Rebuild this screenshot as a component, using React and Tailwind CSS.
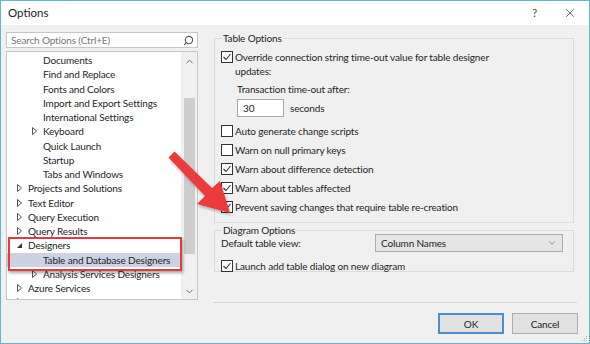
import { Search, X, ChevronUp, ChevronDown } from 'lucide-react';

const font = { fontFamily: 'Lato, "Noto Sans", sans-serif' };

const treeRows = [
  { label: 'Documents', level: 2 },
  { label: 'Find and Replace', level: 2 },
  { label: 'Fonts and Colors', level: 2 },
  { label: 'Import and Export Settings', level: 2 },
  { label: 'International Settings', level: 2 },
  { label: 'Keyboard', level: 2, arrow: 'closed' },
  { label: 'Quick Launch', level: 2 },
  { label: 'Startup', level: 2 },
  { label: 'Tabs and Windows', level: 2 },
  { label: 'Projects and Solutions', level: 1, arrow: 'closed' },
  { label: 'Text Editor', level: 1, arrow: 'closed' },
  { label: 'Query Execution', level: 1, arrow: 'closed' },
  { label: 'Query Results', level: 1, arrow: 'closed' },
  { label: 'Designers', level: 1, arrow: 'open' },
  { label: 'Table and Database Designers', level: 2, selected: true },
  { label: 'Analysis Services Designers', level: 2, arrow: 'closed' },
  { label: 'Azure Services', level: 1, arrow: 'closed' },
  { label: 'SQL Server Always On', level: 1, arrow: 'closed' },
];

function Arrow({ type }) {
  if (type === 'open') {
    return (
      <svg width="7" height="7" viewBox="0 0 7 7">
        <path d="M6 1 L6 6 L1 6 Z" fill="#333" />
      </svg>
    );
  }
  return (
    <svg width="7" height="8" viewBox="0 0 7 8">
      <path d="M1.5 0.5 L5.5 4 L1.5 7.5 Z" fill="none" stroke="#555" strokeWidth="1" />
    </svg>
  );
}

function TreeRow({ row }) {
  const indent = row.level === 1 ? 'pl-[9px]' : 'pl-[24px]';
  return (
    <div
      className={`flex items-center h-[14.25px] ${indent} ${row.selected ? 'bg-[#cdd2e0]' : ''}`}
    >
      <span className="w-[12px] flex items-center">
        {row.arrow && <Arrow type={row.arrow} />}
      </span>
      <span className="whitespace-nowrap">{row.label}</span>
    </div>
  );
}

function Check({ checked }) {
  return (
    <span className="w-[12px] h-[12px] border border-[#333] bg-white flex items-center justify-center shrink-0">
      {checked && (
        <svg width="10" height="10" viewBox="0 0 10 10">
          <path d="M1.5 5 L4 7.5 L8.5 2" fill="none" stroke="#333" strokeWidth="1.1" />
        </svg>
      )}
    </span>
  );
}

function CheckRow({ checked, children, className = '' }) {
  return (
    <div className={`flex items-start gap-[2px] ${className}`}>
      <span className="pt-[1px]">
        <Check checked={checked} />
      </span>
      <span className="leading-[14px]">{children}</span>
    </div>
  );
}

export default function App() {
  return (
    <div
      className="relative w-[590px] h-[344px] border border-[#5fb8c2] bg-[#f0f0f0] flex flex-col text-[10px] leading-[14px] tracking-[-0.15px] text-[#1e1e1e] overflow-hidden"
      style={font}
    >
      <div className="h-[24px] bg-white flex items-center pl-[7px] pr-[12px] shrink-0">
        <span className="text-[11.5px] tracking-normal flex-1">Options</span>
        <span className="text-[11px] text-[#444] mr-[26px]">?</span>
        <X size={14} strokeWidth={1.2} className="text-[#333]" />
      </div>

      <div className="flex pt-[7px] shrink-0">
        <div className="ml-[5px] w-[192px] flex flex-col">
          <div className="h-[16px] bg-white border border-[#c7c7c7] flex items-center pl-[4px] pr-[3px]">
            <span className="flex-1 text-[#767676]">Search Options (Ctrl+E)</span>
            <Search size={11} strokeWidth={2.4} className="text-[#555] -scale-x-100" />
          </div>
          <div className="mt-[3px] h-[249px] bg-white border border-[#c7c7c7] flex overflow-hidden">
            <div className="flex-1 pt-[1px] overflow-hidden">
              {treeRows.map((r) => (
                <TreeRow key={r.label} row={r} />
              ))}
            </div>
            <div className="w-[16px] bg-[#f0f0f0] flex flex-col items-center">
              <ChevronUp size={11} strokeWidth={2} className="text-[#606060] mt-[4px]" />
              <div className="w-[11px] h-[156px] bg-[#cdcdcd] mt-[31px]" />
              <div className="flex-1" />
              <ChevronDown size={11} strokeWidth={2} className="text-[#606060] mb-[2px]" />
            </div>
          </div>
        </div>

        <div className="ml-[16px] w-[360px] flex flex-col">
          <fieldset className="border border-[#dcdcdc] px-[6px] pb-[8px] h-[192px] -mt-[1px]">
            <legend className="px-[1px] ml-[1px]">Table Options</legend>
            <CheckRow checked className="mt-[5px]">
              Override connection string time-out value for table designer
              <br />
              updates:
            </CheckRow>
            <div className="ml-[16px] mt-[4px]">Transaction time-out after:</div>
            <div className="flex items-center ml-[16px] mt-[3px]">
              <div className="w-[47px] h-[18px] bg-white border border-[#aaa] flex items-center pl-[5px]">30</div>
              <span className="ml-[6px]">seconds</span>
            </div>
            <CheckRow className="mt-[7px]">Auto generate change scripts</CheckRow>
            <CheckRow className="mt-[5px]">Warn on null primary keys</CheckRow>
            <CheckRow checked className="mt-[5px]">Warn about difference detection</CheckRow>
            <CheckRow checked className="mt-[5px]">Warn about tables affected</CheckRow>
            <CheckRow checked className="mt-[5px]">Prevent saving changes that require table re-creation</CheckRow>
          </fieldset>

          <fieldset className="border border-[#dcdcdc] px-[6px] h-[49px]">
            <legend className="px-[1px] ml-[1px]">Diagram Options</legend>
            <div className="flex items-center -mt-[3px]">
              <span className="w-[154px]">Default table view:</span>
              <div className="w-[188px] h-[18px] bg-[#e5e5e5] border border-[#acacac] flex items-center pl-[5px] pr-[5px]">
                <span className="flex-1">Column Names</span>
                <ChevronDown size={10} strokeWidth={1.4} className="text-[#555]" />
              </div>
            </div>
            <CheckRow checked className="mt-[7px]">Launch add table dialog on new diagram</CheckRow>
          </fieldset>
        </div>
      </div>

      <div className="ml-[212px] mr-[12px] mt-[2px] h-[1px] bg-[#d5d5d5]" />

      <div className="flex justify-end gap-[8px] mr-[11px] mt-[10px]">
        <button className="w-[66px] h-[21px] bg-[#e1e1e1] border-2 border-[#4a8fd0] flex items-center justify-center">OK</button>
        <button className="w-[66px] h-[21px] bg-[#e1e1e1] border border-[#adadad] flex items-center justify-center">Cancel</button>
      </div>

      <svg className="absolute right-[1px] bottom-[1px]" width="8" height="8" viewBox="0 0 8 8">
        <g fill="#b0b0b0">
          <rect x="6" y="2" width="1" height="1" />
          <rect x="4" y="4" width="1" height="1" />
          <rect x="6" y="4" width="1" height="1" />
          <rect x="2" y="6" width="1" height="1" />
          <rect x="4" y="6" width="1" height="1" />
          <rect x="6" y="6" width="1" height="1" />
        </g>
      </svg>

      <div className="absolute left-[7px] top-[236px] w-[174px] h-[34px] border-2 border-[#e23b3b] shadow-[1px_2px_3px_rgba(0,0,0,0.35)]" />

      <svg className="absolute left-0 top-0 pointer-events-none" width="590" height="344" viewBox="0 0 590 344">
        <defs>
          <filter id="sh" x="-20%" y="-20%" width="140%" height="140%">
            <feDropShadow dx="1" dy="2" stdDeviation="1.5" floodColor="#000" floodOpacity="0.3" />
          </filter>
        </defs>
        <g filter="url(#sh)" fill="#ec3b3d">
          <path d="M167.5 156.5 L173.5 150.5 L211 187 L219 180 L229 212 L196 203 L204 195 Z" strokeLinejoin="round" />
        </g>
      </svg>
    </div>
  );
}
